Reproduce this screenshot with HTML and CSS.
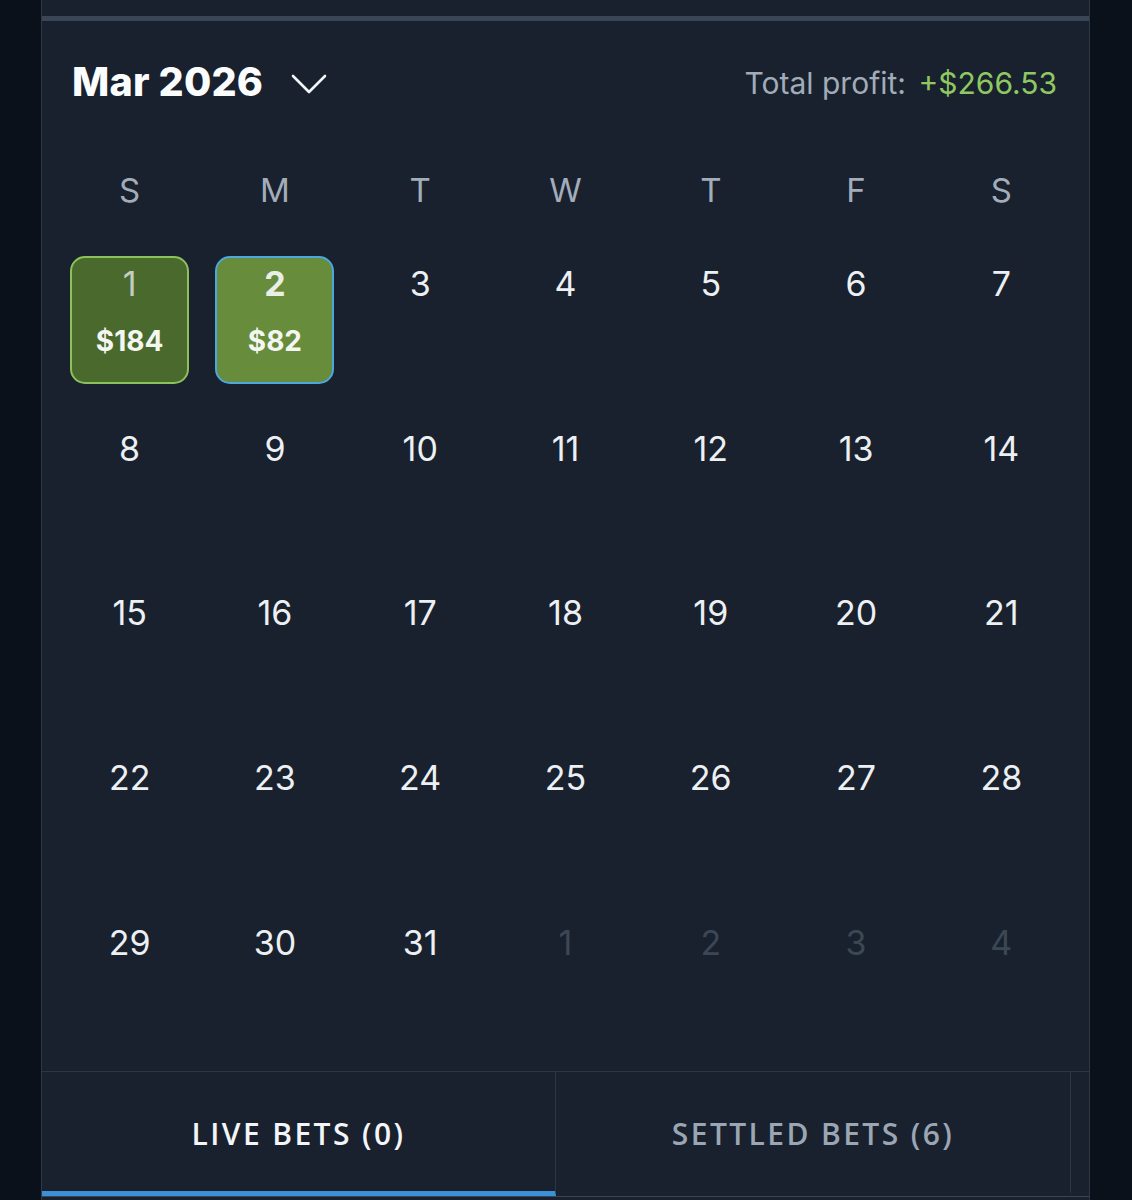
FILE: index.html
```html
<!doctype html>
<html>
<head>
	<title>Calendar</title>
	<link rel="stylesheet" href="styles.css">
</head>
<body>
	<div class="panel">
		<div class="band"></div>

		<div class="header">
			<div class="month">
				<span>Mar 2026</span>
				<svg class="chevron" width="36" height="20" viewBox="0 0 36 20"><path d="M2 2 L18 18 L34 2" fill="none" stroke="#f2f4f7" stroke-width="2.6" stroke-linecap="round" stroke-linejoin="round"/></svg>
			</div>
			<div class="profit">Total profit: <span class="plus">+$266.53</span></div>
		</div>

		<div class="weekdays">
			<div>S</div><div>M</div><div>T</div><div>W</div><div>T</div><div>F</div><div>S</div>
		</div>

		<div class="days">
			<div class="day"><div class="box win"><span class="num">1</span><span class="amt">$184</span></div></div>
			<div class="day"><div class="box win today"><span class="num">2</span><span class="amt">$82</span></div></div>
			<div class="day"><span class="num">3</span></div>
			<div class="day"><span class="num">4</span></div>
			<div class="day"><span class="num">5</span></div>
			<div class="day"><span class="num">6</span></div>
			<div class="day"><span class="num">7</span></div>

			<div class="day"><span class="num">8</span></div>
			<div class="day"><span class="num">9</span></div>
			<div class="day"><span class="num">10</span></div>
			<div class="day"><span class="num">11</span></div>
			<div class="day"><span class="num">12</span></div>
			<div class="day"><span class="num">13</span></div>
			<div class="day"><span class="num">14</span></div>

			<div class="day"><span class="num">15</span></div>
			<div class="day"><span class="num">16</span></div>
			<div class="day"><span class="num">17</span></div>
			<div class="day"><span class="num">18</span></div>
			<div class="day"><span class="num">19</span></div>
			<div class="day"><span class="num">20</span></div>
			<div class="day"><span class="num">21</span></div>

			<div class="day"><span class="num">22</span></div>
			<div class="day"><span class="num">23</span></div>
			<div class="day"><span class="num">24</span></div>
			<div class="day"><span class="num">25</span></div>
			<div class="day"><span class="num">26</span></div>
			<div class="day"><span class="num">27</span></div>
			<div class="day"><span class="num">28</span></div>

			<div class="day"><span class="num">29</span></div>
			<div class="day"><span class="num">30</span></div>
			<div class="day"><span class="num">31</span></div>
			<div class="day other"><span class="num">1</span></div>
			<div class="day other"><span class="num">2</span></div>
			<div class="day other"><span class="num">3</span></div>
			<div class="day other"><span class="num">4</span></div>
		</div>

		<div class="tabs">
			<div class="tab active">LIVE BETS (0)</div>
			<div class="tab">SETTLED BETS (6)</div>
		</div>
	</div>
</body>
</html>
```

FILE: styles.css
```css
body {
	margin: 0;
	background: #0b111a;
	font-family: Inter, "Noto Sans", sans-serif;
}

.panel {
	margin-left: 41px;
	width: 1047px;
	height: 1184px;
	padding-top: 16px;
	background: #18212d;
	border-left: 1px solid #2e3947;
	border-right: 1px solid #2e3947;
}

.band {
	height: 5px;
	background: #3a4655;
}

.header {
	height: 122px;
	padding: 0 32px 0 30px;
	display: flex;
	align-items: center;
	justify-content: space-between;
}

.month {
	display: flex;
	align-items: center;
	gap: 28px;
	color: #fbfcfd;
	font-size: 39.5px;
	font-weight: 800;
	letter-spacing: 0.2px;
}

.chevron {
	margin-top: 4px;
}

.profit {
	color: #a2acb9;
	font-size: 30px;
	margin-top: 2px;
}

.plus {
	color: #8fc862;
	margin-left: 4px;
}

.weekdays {
	height: 94px;
	padding: 0 15px;
	display: grid;
	grid-template-columns: repeat(7, 1fr);
	align-items: center;
	text-align: center;
	color: #a3adba;
	font-size: 33px;
}

.days {
	padding: 19px 15px 0;
	display: grid;
	grid-template-columns: repeat(7, 1fr);
	grid-auto-rows: 127px;
	row-gap: 37.7px;
}

.day {
	display: flex;
	justify-content: center;
	padding-top: 8px;
	box-sizing: border-box;
}

.num {
	display: block;
	height: 40px;
	line-height: 40px;
	color: #edf0f3;
	font-size: 34px;
	text-align: center;
}

.other .num {
	color: #3c4756;
}

.box {
	width: 119px;
	height: 128px;
	margin-top: -8px;
	padding-top: 8px;
	box-sizing: border-box;
	border-radius: 15px;
	display: flex;
	flex-direction: column;
	align-items: center;
}

.win {
	background: #4a6a2d;
	border: 2.5px solid #8cc15b;
}

.win .num {
	color: #c3cbc2;
	margin-top: -2px;
}

.today {
	background: #668c3c;
	border-color: #4ca7dd;
}

.today .num {
	color: #eaeee6;
	font-weight: 700;
}

.amt {
	margin-top: 21px;
	color: #f4f6f2;
	font-size: 28px;
	font-weight: 700;
	line-height: 32px;
}

.tabs {
	margin-top: 29px;
	border-top: 1px solid #2c3744;
	border-bottom: 1px solid #3a4655;
	display: grid;
	grid-template-columns: 514px 515px;
}

.tab {
	height: 124px;
	display: flex;
	align-items: center;
	justify-content: center;
	border-right: 1px solid #2c3744;
	border-bottom: 5px solid transparent;
	box-sizing: border-box;
	padding-top: 4px;
	font-family: "Open Sans", "Noto Sans", sans-serif;
	font-size: 30px;
	font-weight: 600;
	letter-spacing: 2.4px;
	color: #9ba6b4;
}

.tab.active {
	color: #f3f5f8;
	border-bottom-color: #3b90d6;
}
```
